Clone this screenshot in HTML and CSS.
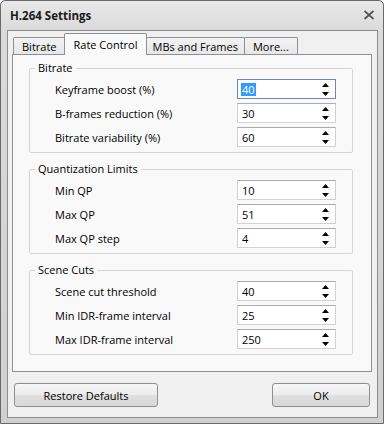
FILE: index.html
```html
<!DOCTYPE html>
<html lang="en">
<head>
    <meta charset="UTF-8">
    <title>H.264 Settings</title>
    <link rel="stylesheet" href="styles.css">
</head>
<body>
    <div class="window">
        <div class="titlebar">
            <span class="title">H.264 Settings</span>
            <svg class="close" width="12" height="11" viewBox="0 0 12 11">
                <path d="M1.5 1.5 L10.5 9.5 M10.5 1.5 L1.5 9.5" stroke="#fff" stroke-width="2.6" opacity="0.6"/>
                <path d="M1.5 1 L10.5 9 M10.5 1 L1.5 9" stroke="#555" stroke-width="1.8"/>
            </svg>
        </div>
        <div class="client">
            <div class="tabs">
                <div class="tab">Bitrate</div>
                <div class="tab selected">Rate Control</div>
                <div class="tab narrow">MBs and Frames</div>
                <div class="tab">More...</div>
            </div>
            <div class="panel">
                <fieldset class="group">
                    <legend>Bitrate</legend>
                    <div class="row">
                        <label>Keyframe boost (%)</label>
                        <div class="spin focused"><span class="value highlighted">40</span><svg class="arrows" width="7" height="13" viewBox="0 0 7 13"><path d="M3.5 0 L7 4 L0 4 Z M0 9 L7 9 L3.5 13 Z" fill="#000"/></svg></div>
                    </div>
                    <div class="row">
                        <label>B-frames reduction (%)</label>
                        <div class="spin"><span class="value">30</span><svg class="arrows" width="7" height="13" viewBox="0 0 7 13"><path d="M3.5 0 L7 4 L0 4 Z M0 9 L7 9 L3.5 13 Z" fill="#000"/></svg></div>
                    </div>
                    <div class="row">
                        <label>Bitrate variability (%)</label>
                        <div class="spin"><span class="value">60</span><svg class="arrows" width="7" height="13" viewBox="0 0 7 13"><path d="M3.5 0 L7 4 L0 4 Z M0 9 L7 9 L3.5 13 Z" fill="#000"/></svg></div>
                    </div>
                </fieldset>
                <fieldset class="group">
                    <legend>Quantization Limits</legend>
                    <div class="row">
                        <label>Min QP</label>
                        <div class="spin"><span class="value">10</span><svg class="arrows" width="7" height="13" viewBox="0 0 7 13"><path d="M3.5 0 L7 4 L0 4 Z M0 9 L7 9 L3.5 13 Z" fill="#000"/></svg></div>
                    </div>
                    <div class="row">
                        <label>Max QP</label>
                        <div class="spin"><span class="value">51</span><svg class="arrows" width="7" height="13" viewBox="0 0 7 13"><path d="M3.5 0 L7 4 L0 4 Z M0 9 L7 9 L3.5 13 Z" fill="#000"/></svg></div>
                    </div>
                    <div class="row">
                        <label>Max QP step</label>
                        <div class="spin"><span class="value">4</span><svg class="arrows" width="7" height="13" viewBox="0 0 7 13"><path d="M3.5 0 L7 4 L0 4 Z M0 9 L7 9 L3.5 13 Z" fill="#000"/></svg></div>
                    </div>
                </fieldset>
                <fieldset class="group">
                    <legend>Scene Cuts</legend>
                    <div class="row">
                        <label>Scene cut threshold</label>
                        <div class="spin"><span class="value">40</span><svg class="arrows" width="7" height="13" viewBox="0 0 7 13"><path d="M3.5 0 L7 4 L0 4 Z M0 9 L7 9 L3.5 13 Z" fill="#000"/></svg></div>
                    </div>
                    <div class="row">
                        <label>Min IDR-frame interval</label>
                        <div class="spin"><span class="value">25</span><svg class="arrows" width="7" height="13" viewBox="0 0 7 13"><path d="M3.5 0 L7 4 L0 4 Z M0 9 L7 9 L3.5 13 Z" fill="#000"/></svg></div>
                    </div>
                    <div class="row">
                        <label>Max IDR-frame interval</label>
                        <div class="spin"><span class="value">250</span><svg class="arrows" width="7" height="13" viewBox="0 0 7 13"><path d="M3.5 0 L7 4 L0 4 Z M0 9 L7 9 L3.5 13 Z" fill="#000"/></svg></div>
                    </div>
                </fieldset>
            </div>
            <div class="buttons">
                <button class="btn restore">Restore Defaults</button>
                <button class="btn ok">OK</button>
            </div>
        </div>
    </div>
</body>
</html>
```

FILE: styles.css
```css
body {
    margin: 0;
    padding: 0;
    font-family: 'Open Sans', 'Liberation Sans', sans-serif;
    font-size: 11px;
    color: #000;
    background-color: #fff;
}

.window {
    width: 384px;
    height: 424px;
    box-sizing: border-box;
    border: 1px solid #6a6a6a;
    border-radius: 5px 5px 0 0;
    background: linear-gradient(#e8e8e8, #dadada 30px, #d0d0d0);
    padding: 0 5px 5px 6px;
    display: flex;
    flex-direction: column;
}

.titlebar {
    height: 29px;
    display: flex;
    align-items: center;
    justify-content: space-between;
    padding: 0 3px 0 3px;
}

.title {
    font-weight: bold;
    font-size: 11.5px;
    color: #1a1a1a;
}

.close {
    margin-top: -1px;
}

.client {
    flex: 1;
    border: 1px solid #8c8c8c;
    background-color: #f0f0f0;
    padding: 3px 5px 0 4px;
    display: flex;
    flex-direction: column;
}

.tabs {
    display: flex;
    align-items: flex-end;
    height: 21px;
    padding-left: 1px;
    margin-bottom: -1px;
}

.tab {
    height: 17px;
    line-height: 18px;
    padding: 0 8px;
    border: 1px solid #8e9097;
    border-bottom: none;
    border-radius: 2px 2px 0 0;
    background: linear-gradient(#f3f3f3, #e6e6e6);
    margin-right: -1px;
}

.tab.narrow {
    padding: 0 6px 0 5px;
}

.tab.selected {
    height: 21px;
    line-height: 22px;
    padding: 0 9px;
    margin: 0 -1px;
    background: #f9f9f9;
    position: relative;
    z-index: 1;
}

.panel {
    height: 318px;
    box-sizing: border-box;
    border: 1px solid #8e9097;
    background-color: #f9f9f9;
    padding: 6px 18px 0 16px;
}

.group {
    margin: 0 0 9px;
    padding: 4px 16px 5px 25px;
    border: 1px solid #d5d5d5;
    border-radius: 2px;
    min-inline-size: 0;
}

.group legend {
    line-height: 14px;
    padding: 0 3px;
    margin-left: -20px;
}

.row {
    display: flex;
    align-items: center;
    justify-content: space-between;
    height: 20px;
    margin-bottom: 4px;
}

.row:last-child {
    margin-bottom: 0;
}

.spin {
    width: 99px;
    height: 20px;
    box-sizing: border-box;
    border: 1px solid #cfd3d8;
    border-top-color: #a9abb0;
    background-color: #fff;
    display: flex;
    align-items: center;
    justify-content: space-between;
    padding: 0 6px 0 3px;
}

.spin.focused {
    border-color: #6f87b5;
}

.value {
    padding: 0 1px;
    line-height: 13px;
}

.value.highlighted {
    background-color: #3399ff;
    color: #fff;
}

.buttons {
    display: flex;
    justify-content: space-between;
    padding: 11px 2px 0 2px;
}

.btn {
    height: 24px;
    font-family: inherit;
    font-size: 11px;
    color: #000;
    border: 1px solid #8f8f8f;
    border-radius: 3px;
    background: linear-gradient(#f6f6f6, #ececec 50%, #e0e0e0 51%, #d8d8d8);
    padding: 0;
}

.restore {
    width: 144px;
}

.ok {
    width: 98px;
}
```
